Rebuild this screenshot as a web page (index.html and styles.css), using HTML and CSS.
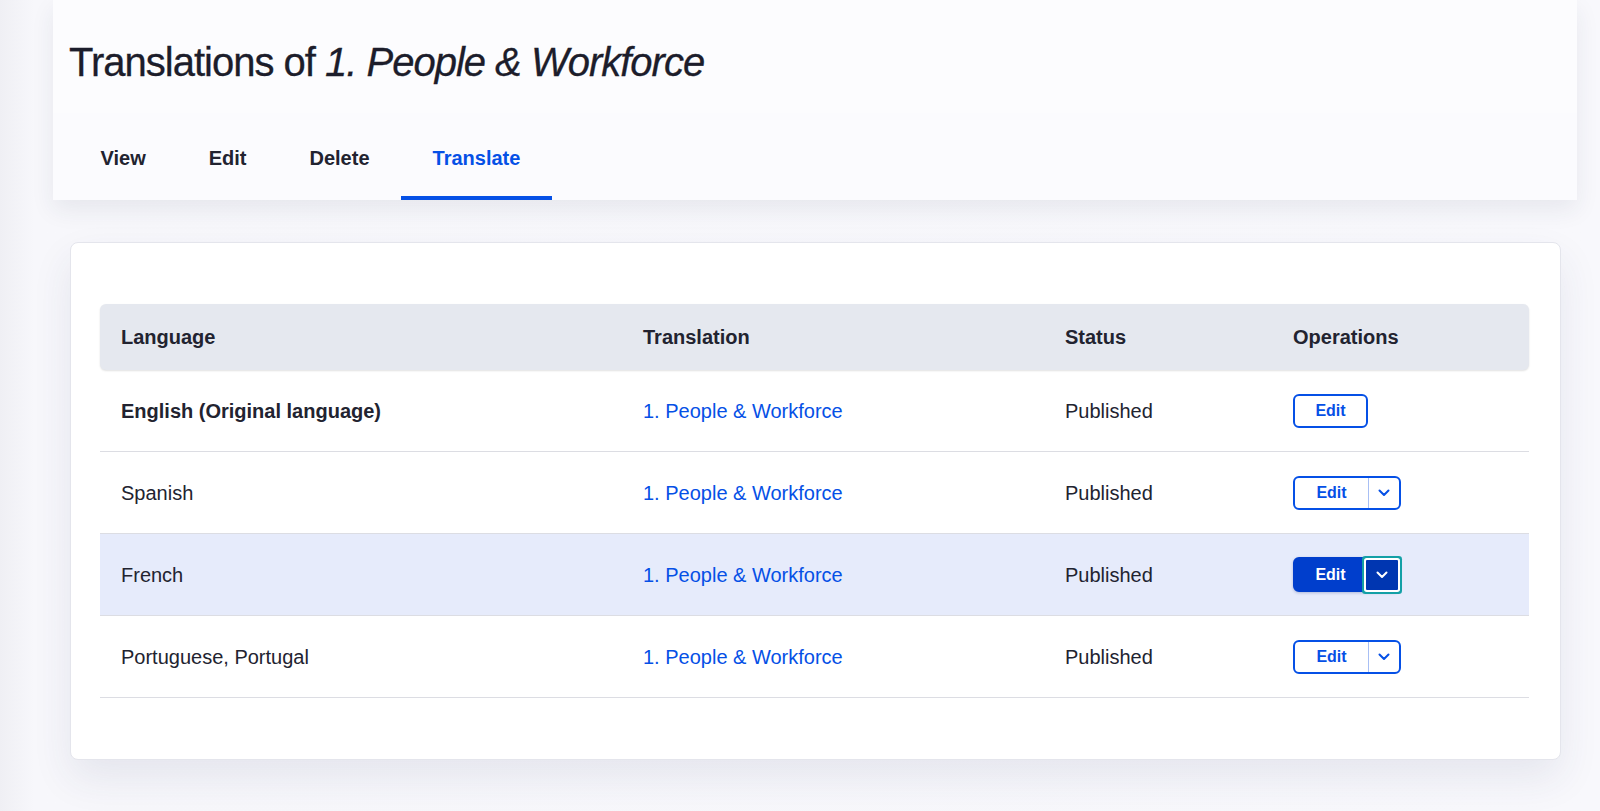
FILE: index.html
```html
<!DOCTYPE html>
<html lang="en">
<head>
<meta charset="utf-8">
<title>Translations of 1. People &amp; Workforce</title>
<link rel="stylesheet" href="styles.css">
</head>
<body>
<header class="page-header">
  <h1 class="page-title">Translations of <em>1. People &amp; Workforce</em></h1>
  <nav class="tabs">
    <a class="tab" href="#">View</a>
    <a class="tab" href="#">Edit</a>
    <a class="tab" href="#">Delete</a>
    <a class="tab is-active" href="#">Translate</a>
  </nav>
</header>
<main class="card">
  <div class="table">
    <div class="thead">
      <div class="cell">Language</div>
      <div class="cell">Translation</div>
      <div class="cell">Status</div>
      <div class="cell">Operations</div>
    </div>
    <div class="row">
      <div class="cell"><strong>English (Original language)</strong></div>
      <div class="cell"><a class="link" href="#">1. People &amp; Workforce</a></div>
      <div class="cell">Published</div>
      <div class="cell"><a class="btn" href="#">Edit</a></div>
    </div>
    <div class="row">
      <div class="cell">Spanish</div>
      <div class="cell"><a class="link" href="#">1. People &amp; Workforce</a></div>
      <div class="cell">Published</div>
      <div class="cell">
        <div class="split">
          <a class="split-main" href="#">Edit</a>
          <button class="split-toggle" type="button"><svg width="12" height="8" viewBox="0 0 12 8"><path d="M1.5 1.5 L6 6 L10.5 1.5" fill="none" stroke="currentColor" stroke-width="2" stroke-linecap="round" stroke-linejoin="round"/></svg></button>
        </div>
      </div>
    </div>
    <div class="row is-highlight">
      <div class="cell">French</div>
      <div class="cell"><a class="link" href="#">1. People &amp; Workforce</a></div>
      <div class="cell">Published</div>
      <div class="cell">
        <div class="split is-active">
          <a class="split-main" href="#">Edit</a>
          <button class="split-toggle is-focus" type="button"><svg width="12" height="8" viewBox="0 0 12 8"><path d="M1.5 1.5 L6 6 L10.5 1.5" fill="none" stroke="currentColor" stroke-width="2" stroke-linecap="round" stroke-linejoin="round"/></svg></button>
        </div>
      </div>
    </div>
    <div class="row">
      <div class="cell">Portuguese, Portugal</div>
      <div class="cell"><a class="link" href="#">1. People &amp; Workforce</a></div>
      <div class="cell">Published</div>
      <div class="cell">
        <div class="split">
          <a class="split-main" href="#">Edit</a>
          <button class="split-toggle" type="button"><svg width="12" height="8" viewBox="0 0 12 8"><path d="M1.5 1.5 L6 6 L10.5 1.5" fill="none" stroke="currentColor" stroke-width="2" stroke-linecap="round" stroke-linejoin="round"/></svg></button>
        </div>
      </div>
    </div>
  </div>
</main>
</body>
</html>
```
FILE: styles.css
```css
* { box-sizing: border-box; }

html, body {
  margin: 0;
  padding: 0;
}

body {
  min-height: 811px;
  background: linear-gradient(to right, #efeff4 0, #f7f7fb 34px, #f8f8fc 100%);
  font-family: "Liberation Sans", Arial, Helvetica, sans-serif;
  color: #222330;
  overflow: hidden;
}

.page-header {
  margin: 0 23px 0 53px;
  background: linear-gradient(to bottom, #fcfcfe 0, #fcfcfe 113px, #fbfbfe 113px);
  box-shadow: 0 10px 22px rgba(40, 45, 80, 0.08);
  padding-left: 16px;
}

.page-title {
  margin: 0;
  padding: 38px 0 27px;
  font-size: 40px;
  line-height: 48px;
  font-weight: 400;
  letter-spacing: -1px;
  color: #1c1d2b;
  -webkit-text-stroke: 0.3px #1c1d2b;
}

.page-title em {
  font-style: italic;
}

.tabs {
  display: flex;
  height: 87px;
}

.tab {
  display: flex;
  align-items: center;
  height: 87px;
  padding: 6px 31.5px 0;
  border-bottom: 4px solid transparent;
  font-size: 20px;
  line-height: 24px;
  font-weight: 700;
  color: #222330;
  text-decoration: none;
}

.tab.is-active {
  color: #0550e6;
  border-bottom-color: #0550e6;
}

.card {
  display: block;
  margin: 42px 39px 0 70px;
  padding: 61px 31px 61px 29px;
  background: #ffffff;
  border: 1px solid #e4e5ec;
  border-radius: 8px;
  box-shadow: 0 18px 40px rgba(40, 50, 100, 0.09);
}

.thead,
.row {
  display: grid;
  grid-template-columns: 522px 422px 228px 1fr;
  align-items: center;
}

.thead {
  height: 66px;
  background: #e5e8ef;
  border-radius: 6px;
  box-shadow: 0 1px 2px rgba(0, 0, 0, 0.12);
  font-weight: 700;
  font-size: 20px;
}

.row {
  height: 82px;
  border-bottom: 1px solid #dcdde3;
  font-size: 20px;
}

.row.is-highlight {
  background: #e6ebfb;
}

.cell {
  padding-left: 21px;
  line-height: 24px;
}

.link {
  color: #0550e6;
  text-decoration: none;
}

.btn {
  display: inline-flex;
  align-items: center;
  justify-content: center;
  width: 75px;
  height: 34px;
  border: 2px solid #0550e6;
  border-radius: 6px;
  font-size: 16px;
  font-weight: 700;
  color: #0550e6;
  text-decoration: none;
  vertical-align: middle;
}

.split {
  display: inline-flex;
  height: 34px;
  border: 2px solid #0550e6;
  border-radius: 6px;
  vertical-align: middle;
  background: #fff;
}

.split-main {
  display: flex;
  align-items: center;
  justify-content: center;
  width: 73px;
  font-size: 16px;
  font-weight: 700;
  color: #0550e6;
  text-decoration: none;
}

.split-toggle {
  display: flex;
  align-items: center;
  justify-content: center;
  width: 31px;
  margin: 0;
  padding: 0;
  border: 0;
  border-left: 1px solid #a8bff4;
  background: transparent;
  color: #0550e6;
  font: inherit;
  border-radius: 0 4px 4px 0;
}

.split.is-active {
  background: #003ecc;
  border-color: #003ecc;
  height: 35px;
  box-shadow: 0 1px 3px rgba(0, 30, 120, 0.25);
}

.split.is-active .split-main {
  color: #ffffff;
  width: 71px;
}

.split.is-active .split-toggle {
  width: 32px;
  margin: 1px 0 0 0;
  height: 30px;
  background: #0036b1;
  border-left: 0;
  color: #ffffff;
  border-radius: 1px;
}

.split-toggle.is-focus {
  box-shadow: 0 0 0 2px #ffffff, 0 0 0 4px #13a0a6;
}
```
